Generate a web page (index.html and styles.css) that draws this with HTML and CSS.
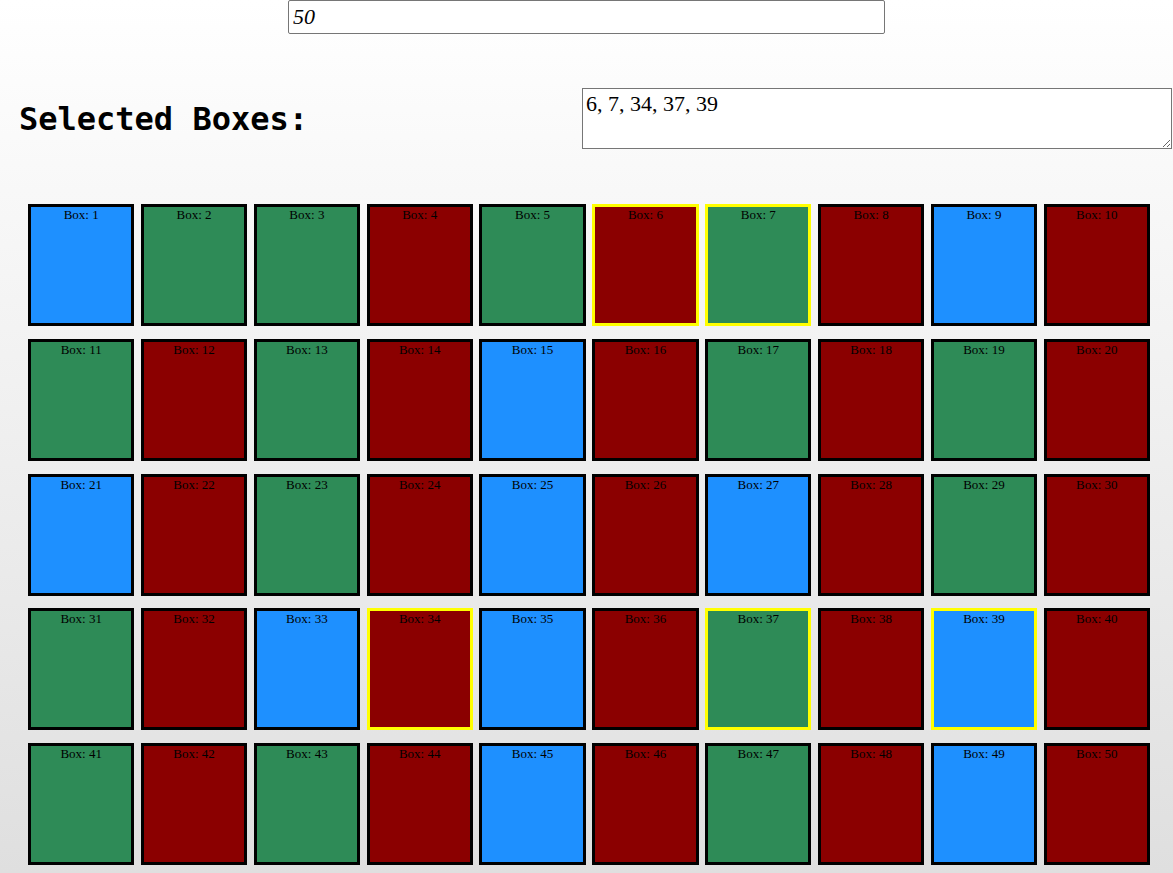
FILE: index.html
```html
<!DOCTYPE html>
<html>
<head>
<meta charset="utf-8">
<title>Boxes</title>
<link rel="stylesheet" href="styles.css">
</head>
<body>
<input class="count" type="text" value="50">
<div class="header">
  <h2 class="title">Selected Boxes:</h2>
  <textarea class="selected">6, 7, 34, 37, 39</textarea>
</div>
<div class="grid">
  <div class="box blue">Box: 1</div>
  <div class="box green">Box: 2</div>
  <div class="box green">Box: 3</div>
  <div class="box red">Box: 4</div>
  <div class="box green">Box: 5</div>
  <div class="box red sel">Box: 6</div>
  <div class="box green sel">Box: 7</div>
  <div class="box red">Box: 8</div>
  <div class="box blue">Box: 9</div>
  <div class="box red">Box: 10</div>
  <div class="box green">Box: 11</div>
  <div class="box red">Box: 12</div>
  <div class="box green">Box: 13</div>
  <div class="box red">Box: 14</div>
  <div class="box blue">Box: 15</div>
  <div class="box red">Box: 16</div>
  <div class="box green">Box: 17</div>
  <div class="box red">Box: 18</div>
  <div class="box green">Box: 19</div>
  <div class="box red">Box: 20</div>
  <div class="box blue">Box: 21</div>
  <div class="box red">Box: 22</div>
  <div class="box green">Box: 23</div>
  <div class="box red">Box: 24</div>
  <div class="box blue">Box: 25</div>
  <div class="box red">Box: 26</div>
  <div class="box blue">Box: 27</div>
  <div class="box red">Box: 28</div>
  <div class="box green">Box: 29</div>
  <div class="box red">Box: 30</div>
  <div class="box green">Box: 31</div>
  <div class="box red">Box: 32</div>
  <div class="box blue">Box: 33</div>
  <div class="box red sel">Box: 34</div>
  <div class="box blue">Box: 35</div>
  <div class="box red">Box: 36</div>
  <div class="box green sel">Box: 37</div>
  <div class="box red">Box: 38</div>
  <div class="box blue sel">Box: 39</div>
  <div class="box red">Box: 40</div>
  <div class="box green">Box: 41</div>
  <div class="box red">Box: 42</div>
  <div class="box green">Box: 43</div>
  <div class="box red">Box: 44</div>
  <div class="box blue">Box: 45</div>
  <div class="box red">Box: 46</div>
  <div class="box green">Box: 47</div>
  <div class="box red">Box: 48</div>
  <div class="box blue">Box: 49</div>
  <div class="box red">Box: 50</div>
</div>
</body>
</html>
```
FILE: styles.css
```css
html, body {
  margin: 0;
  padding: 0;
}
body {
  min-height: 873px;
  background: linear-gradient(to bottom, #ffffff 0%, #dfdfdf 100%);
  font-family: "Liberation Serif", serif;
  overflow: hidden;
}
.count {
  display: block;
  box-sizing: border-box;
  width: 597px;
  height: 34px;
  margin: 0 auto;
  padding: 0 4px;
  border: 1px solid #767676;
  border-radius: 2px;
  background: #fff;
  font-family: "Liberation Serif", serif;
  font-style: italic;
  font-size: 22px;
  color: #000;
}
.header {
  display: flex;
  align-items: center;
  justify-content: space-between;
  margin-top: 54px;
  padding-left: 19px;
  padding-right: 1px;
}
.title {
  margin: 0;
  font-family: "DejaVu Sans Mono", monospace;
  font-weight: bold;
  font-size: 32px;
  color: #000;
}
.selected {
  box-sizing: border-box;
  width: 590px;
  height: 61px;
  margin: 0;
  padding: 2px 3px;
  border: 1px solid #767676;
  background: #fff;
  font-family: "Liberation Serif", serif;
  font-size: 22px;
  color: #000;
}
.grid {
  display: grid;
  grid-template-columns: repeat(10, 1fr);
  column-gap: 6.5px;
  row-gap: 12.75px;
  width: 1122px;
  margin: 55px 0 0 28px;
}
.box {
  box-sizing: border-box;
  height: 122px;
  border: 3px solid #000;
  text-align: center;
  font-family: "Liberation Serif", serif;
  font-size: 13px;
  line-height: 15px;
  color: #000;
}
.blue { background: #1e90ff; }
.green { background: #2e8b57; }
.red { background: #8b0000; }
.sel { border-color: #ffff00; }
```
